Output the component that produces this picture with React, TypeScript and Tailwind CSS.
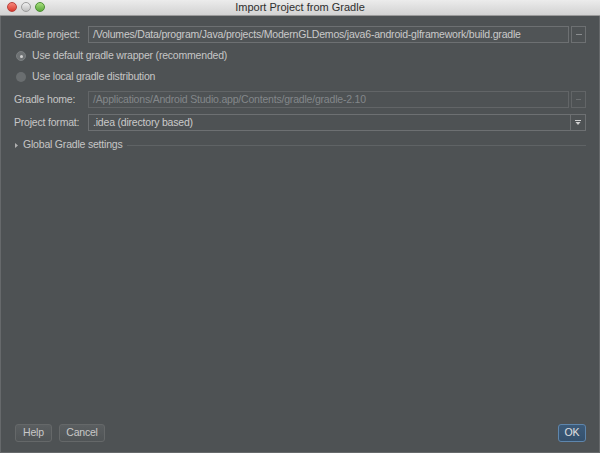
export default function App() {
  const font = { fontFamily: '"Liberation Sans", Arial, sans-serif' };
  return (
    <div className="w-[600px] h-[453px] flex flex-col bg-[#4e5254] text-[#c6c6c6] text-[10.5px] tracking-[-0.2px] overflow-hidden" style={font}>
      {/* title bar */}
      <div className="relative h-[16px] shrink-0 bg-gradient-to-b from-[#ececec] to-[#d2d2d2] border-b border-[#9a9a9a] flex items-center justify-center">
        <div className="absolute left-[7px] top-[2px] flex gap-[4px]">
          <span className="w-[10px] h-[10px] rounded-full bg-gradient-to-b from-[#f7867b] to-[#d9352a] border border-[#b8403a]" />
          <span className="w-[10px] h-[10px] rounded-full bg-gradient-to-b from-[#f0f0f0] to-[#c0c0c0] border border-[#9c9c9c]" />
          <span className="w-[10px] h-[10px] rounded-full bg-gradient-to-b from-[#a8e07e] to-[#5aa83a] border border-[#4b8e32]" />
        </div>
        <span className="text-[#2e2e2e] text-[11px] tracking-normal">Import Project from Gradle</span>
      </div>

      <div className="flex-1 flex flex-col border-x border-b border-[#66696b] px-[13px]">
        {/* gradle project */}
        <div className="mt-[10px] flex items-center h-[17px]">
          <span className="w-[74px] shrink-0 whitespace-nowrap">Gradle project:</span>
          <div className="flex-1 min-w-0 h-[17px] border border-[#6d7072] bg-[#505456] pl-[4px] flex items-center text-[#cacaca] whitespace-nowrap overflow-hidden">
            /Volumes/Data/program/Java/projects/ModernGLDemos/java6-android-glframework/build.gradle
          </div>
          <div className="ml-[2px] w-[15px] h-[17px] border border-[#6d7072] flex items-center justify-center">
            <span className="block w-[6px] h-[1px] bg-[#8a8d8f]" />
          </div>
        </div>

        {/* radios */}
        <div className="mt-[5px] h-[16px] flex items-center gap-[6px] pl-[2px]">
          <span className="w-[10px] h-[10px] rounded-full bg-[#6e7274] border border-[#7a7e80] flex items-center justify-center">
            <span className="w-[3px] h-[3px] rounded-full bg-[#d0d0d0]" />
          </span>
          <span>Use default gradle wrapper (recommended)</span>
        </div>
        <div className="mt-[5px] h-[16px] flex items-center gap-[6px] pl-[2px]">
          <span className="w-[10px] h-[10px] rounded-full bg-[#6a6e70]" />
          <span>Use local gradle distribution</span>
        </div>

        {/* gradle home */}
        <div className="mt-[6px] flex items-center h-[17px]">
          <span className="w-[74px] shrink-0 whitespace-nowrap">Gradle home:</span>
          <div className="flex-1 min-w-0 h-[17px] border border-[#626567] bg-[#4e5254] pl-[4px] flex items-center text-[#83878a] whitespace-nowrap overflow-hidden">
            /Applications/Android Studio.app/Contents/gradle/gradle-2.10
          </div>
          <div className="ml-[2px] w-[15px] h-[17px] border border-[#626567] flex items-center justify-center">
            <span className="block w-[5px] h-[1px] bg-[#6c6f71]" />
          </div>
        </div>

        {/* project format */}
        <div className="mt-[6px] flex items-center h-[17px]">
          <span className="w-[74px] shrink-0 whitespace-nowrap">Project format:</span>
          <div className="flex-1 h-[17px] border border-[#6d7072] bg-[#4e5254] flex items-center">
            <span className="flex-1 pl-[4px] text-[#cacaca]">.idea (directory based)</span>
            <span className="w-[15px] h-full border-l border-[#6d7072] flex items-center justify-center">
              <svg width="6" height="5" viewBox="0 0 6 5">
                <rect x="0" y="0" width="6" height="1" fill="#d0d0d0" />
                <path d="M0.5 2 L5.5 2 L3 5 Z" fill="#d0d0d0" />
              </svg>
            </span>
          </div>
        </div>

        {/* global settings */}
        <div className="mt-[7px] h-[14px] flex items-center">
          <svg width="3" height="5" viewBox="0 0 3 5" className="ml-[1px] mr-[5px]">
            <path d="M0 0 L3 2.5 L0 5 Z" fill="#b0b0b0" />
          </svg>
          <span className="whitespace-nowrap">Global Gradle settings</span>
          <div className="flex-1 h-[1px] bg-[#5f6365] ml-[4px]" />
        </div>

        <div className="flex-1" />

        {/* bottom buttons */}
        <div className="mb-[10px] flex items-center">
          <button className="h-[18px] w-[37px] rounded-[3px] border border-[#656869] bg-gradient-to-b from-[#5a5e60] to-[#505456] text-[#c8c8c8] text-[10.5px] ml-[1px]">
            Help
          </button>
          <button className="h-[18px] w-[46px] rounded-[3px] border border-[#656869] bg-gradient-to-b from-[#5a5e60] to-[#505456] text-[#c8c8c8] text-[10.5px] ml-[7px]">
            Cancel
          </button>
          <div className="flex-1" />
          <button className="h-[18px] w-[28px] rounded-[3px] border border-[#5e86ad] bg-gradient-to-b from-[#3c5b7a] to-[#34506c] text-[#e0e0e0] text-[10.5px]">
            OK
          </button>
        </div>
      </div>
    </div>
  );
}
